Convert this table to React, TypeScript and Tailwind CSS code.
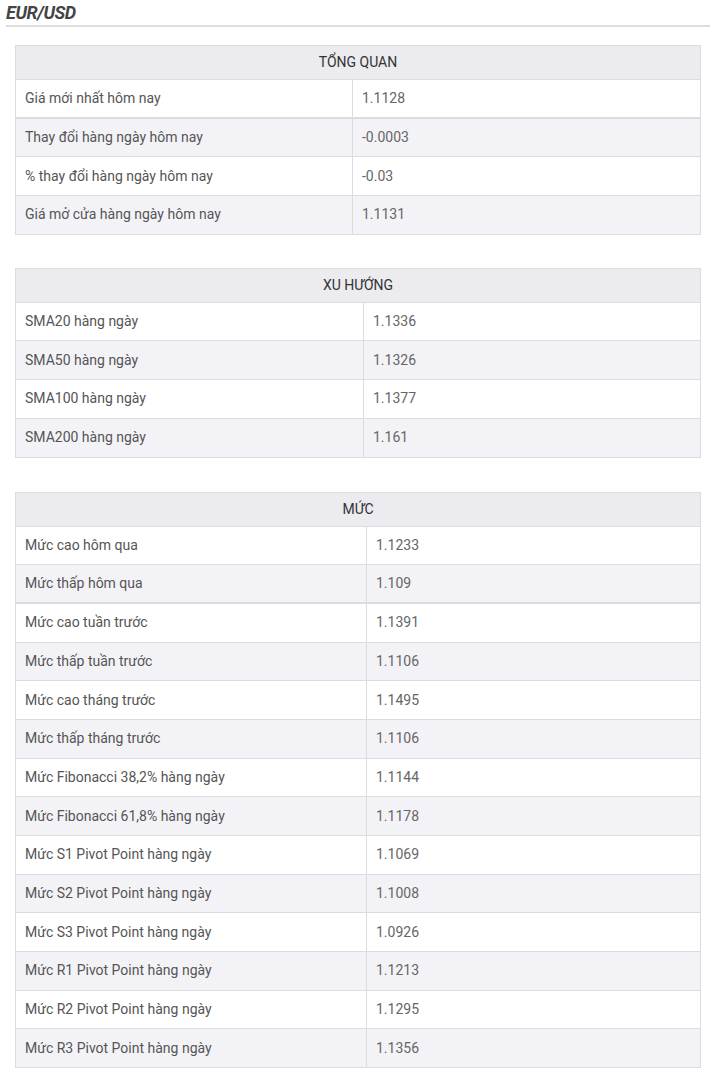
import React from "react";

type Row = { label: string; value: string; thick?: boolean };

const OVERVIEW: Row[] = [
  { label: "Giá mới nhất hôm nay", value: "1.1128" },
  { label: "Thay đổi hàng ngày hôm nay", value: "-0.0003", thick: true },
  { label: "% thay đổi hàng ngày hôm nay", value: "-0.03" },
  { label: "Giá mở cửa hàng ngày hôm nay", value: "1.1131" },
];

const TREND: Row[] = [
  { label: "SMA20 hàng ngày", value: "1.1336" },
  { label: "SMA50 hàng ngày", value: "1.1326" },
  { label: "SMA100 hàng ngày", value: "1.1377" },
  { label: "SMA200 hàng ngày", value: "1.161" },
];

const LEVELS: Row[] = [
  { label: "Mức cao hôm qua", value: "1.1233" },
  { label: "Mức thấp hôm qua", value: "1.109" },
  { label: "Mức cao tuần trước", value: "1.1391", thick: true },
  { label: "Mức thấp tuần trước", value: "1.1106" },
  { label: "Mức cao tháng trước", value: "1.1495" },
  { label: "Mức thấp tháng trước", value: "1.1106" },
  { label: "Mức Fibonacci 38,2% hàng ngày", value: "1.1144" },
  { label: "Mức Fibonacci 61,8% hàng ngày", value: "1.1178" },
  { label: "Mức S1 Pivot Point hàng ngày", value: "1.1069" },
  { label: "Mức S2 Pivot Point hàng ngày", value: "1.1008" },
  { label: "Mức S3 Pivot Point hàng ngày", value: "1.0926" },
  { label: "Mức R1 Pivot Point hàng ngày", value: "1.1213" },
  { label: "Mức R2 Pivot Point hàng ngày", value: "1.1295" },
  { label: "Mức R3 Pivot Point hàng ngày", value: "1.1356" },
];

function DataTable({
  title,
  rows,
  labelWidth,
}: {
  title: string;
  rows: Row[];
  labelWidth: string;
}) {
  return (
    <table className="w-full border-collapse border border-[#dcdce0] text-[14px]">
      <thead>
        <tr className="bg-[#ebebf0]">
          <th
            colSpan={2}
            className="h-[34px] border-b border-[#dcdce0] text-center font-normal text-[#333]"
          >
            {title}
          </th>
        </tr>
      </thead>
      <tbody>
        {rows.map((r, i) => (
          <tr
            key={r.label}
            className={`${i % 2 === 1 ? "bg-[#f3f3f7]" : "bg-white"} ${
              r.thick ? "border-t-2" : "border-t"
            } border-[#dcdce0]`}
          >
            <td
              className={`${labelWidth} h-[38.7px] border-r border-[#dcdce0] px-[9px] text-[#555]`}
            >
              {r.label}
            </td>
            <td className="h-[38.7px] px-[9px] text-[#666]">{r.value}</td>
          </tr>
        ))}
      </tbody>
    </table>
  );
}

export default function App() {
  return (
    <div className="bg-white px-[6px] font-['Roboto',sans-serif]">
      <h2 className="border-b-2 border-[#dedede] pb-[2px] pt-[2px] text-[18px] font-bold italic leading-[21px] tracking-[-0.4px] text-[#444]">
        EUR/USD
      </h2>
      <div className="flex flex-col gap-[33px] px-[9px] pt-[18px] pb-[12px]">
        <DataTable title="TỔNG QUAN" rows={OVERVIEW} labelWidth="w-[337px]" />
        <DataTable title="XU HƯỚNG" rows={TREND} labelWidth="w-[348px]" />
        <div className="mt-[1px]">
          <DataTable title="MỨC" rows={LEVELS} labelWidth="w-[351px]" />
        </div>
      </div>
    </div>
  );
}
